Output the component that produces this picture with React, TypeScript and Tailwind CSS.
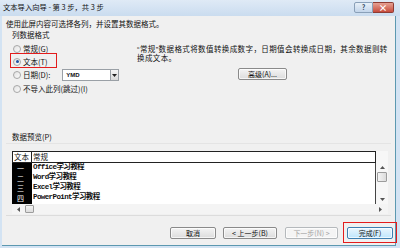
import React from "react";

function Radio({ checked }: { checked?: boolean }) {
  return (
    <span className="w-[8px] h-[8px] rounded-full border border-[#a8a8a8] bg-gradient-to-br from-[#e2e2e2] to-[#fbfbfb] flex items-center justify-center shrink-0">
      {checked && <span className="w-[3px] h-[3px] rounded-full bg-[#1f4fa3]" />}
    </span>
  );
}

function Btn({
  children,
  w,
  disabled,
  def,
}: {
  children: React.ReactNode;
  w: string;
  disabled?: boolean;
  def?: boolean;
}) {
  const base =
    "h-[12px] rounded-[2px] border flex items-center justify-center text-[7px] leading-none whitespace-nowrap shadow-[inset_0_0_0_1px_rgba(255,255,255,0.7)]";
  const look = def
    ? "border-[#3c7fb1] bg-gradient-to-b from-[#eaf6fd] to-[#bee6fd] text-[#111]"
    : disabled
    ? "border-[#b5b9bc] bg-[#f4f4f4] text-[#a3a3a3]"
    : "border-[#8a8a8a] bg-gradient-to-b from-[#f4f4f4] to-[#dcdcdc] text-[#111]";
  return <div className={`${base} ${look} ${w}`}>{children}</div>;
}

export default function App() {
  const rows = [
    ["一", "Office学习教程"],
    ["二", "Word学习教程"],
    ["三", "Excel学习教程"],
    ["四", "PowerPoint学习教程"],
  ];
  return (
    <div className="w-[400px] h-[248px] overflow-hidden bg-[#d3e3f3] flex flex-col font-['Noto_Sans_CJK_SC',sans-serif] text-[7.5px] leading-none text-[#101010]">
      {/* title bar */}
      <div className="h-[16px] shrink-0 flex items-start bg-gradient-to-b from-[#dfeaf6] to-[#cadcef] pl-[3px]">
        <div className="mt-[4px] whitespace-nowrap text-[7.3px] text-[#111]">
          文本导入向导 - 第 3 步，共 3 步
        </div>
        <div className="ml-auto mr-[6px] mt-[2px] flex">
          <div className="w-[19px] h-[11px] rounded-l-[2px] border border-[#8aa0b8] bg-gradient-to-b from-[#e8f0f8] to-[#c3d5ea] flex items-center justify-center text-[7px] text-[#33465e] font-bold">
            ?
          </div>
          <div className="w-[21px] h-[11px] rounded-r-[2px] border border-l-0 border-[#8e3b33] bg-gradient-to-b from-[#e5a093] to-[#c64a3c] flex items-center justify-center text-[9px] text-white font-bold">
            ×
          </div>
        </div>
      </div>

      {/* body */}
      <div className="flex-1 ml-[2px] mr-[4px] mb-[2px] bg-[#f0f0f0] border-r border-b border-[#5c98b0] flex flex-col relative">
        <div className="pt-[4px] pl-[4px] h-[12px] whitespace-nowrap">
          使用此屏内容可选择各列，并设置其数据格式。
        </div>
        <div className="mt-[3px] pl-[10px] h-[8px] whitespace-nowrap">列数据格式</div>

        <div className="mt-[3px] flex">
          {/* left radios */}
          <div className="pl-[11px] w-[135px] flex flex-col">
            <div className="h-[13px] flex items-center gap-[2px]">
              <Radio />
              <span>常规(G)</span>
            </div>
            <div className="h-[13px] flex items-center gap-[2px] relative">
              <Radio checked />
              <span>文本(T)</span>
              <div className="absolute left-[-3px] top-[-2px] w-[47px] h-[15px] border-[1.5px] border-[#e31c1c]" />
            </div>
            <div className="h-[14px] flex items-center gap-[2px]">
              <Radio />
              <span>日期(D):</span>
              <div className="ml-[10px] w-[57px] h-[12px] border border-[#9aa0a6] bg-white flex items-center">
                <span className="pl-[3px] text-[6px] font-bold font-['Liberation_Sans',sans-serif]">YMD</span>
                <div className="ml-auto w-[8px] h-[10px] border-l border-[#9aa0a6] bg-gradient-to-b from-[#f6f6f6] to-[#dadada] flex items-center justify-center">
                  <svg width="5" height="3" viewBox="0 0 5 3">
                    <path d="M0 0h5L2.5 3z" fill="#222" />
                  </svg>
                </div>
              </div>
            </div>
            <div className="h-[13px] flex items-center gap-[2px]">
              <Radio />
              <span>不导入此列(跳过)(I)</span>
            </div>
          </div>
          {/* right description */}
          <div className="pt-[4px] flex flex-col">
            <div className="whitespace-nowrap text-[7.5px] leading-[8.5px] tracking-[0.4px] h-[17px] font-['Liberation_Sans','Noto_Sans_CJK_SC',sans-serif]">
              “常规”数据格式将数值转换成数字，日期值会转换成日期，其余数据则转
              <br />
              换成文本。
            </div>
            <div className="mt-[5px] ml-[101px]">
              <Btn w="w-[49px]">高级(A)...</Btn>
            </div>
          </div>
        </div>

        <div className="mt-[38px] pl-[10px] h-[8px] flex items-center">
          <span className="whitespace-nowrap">数据预览(P)</span>
        </div>
        <div className="mx-[4px] mt-[2px] h-px bg-[#e4e4e4]" />

        {/* preview */}
        <div className="mt-[7px] ml-[10px] w-[376px] h-[63px] flex flex-col bg-white">
          <div className="flex flex-1">
            <div className="w-[364px] flex flex-col">
              <div className="h-[12px] flex border border-[#222] bg-white">
                <div className="w-[19px] border-r border-[#222] flex items-center pl-[1px]">文本</div>
                <div className="flex-1 flex items-center pl-[1px]">常规</div>
              </div>
              <div className="flex-1 flex">
                <div className="w-[20px] bg-black text-white flex flex-col">
                  {rows.map((r) => (
                    <div key={r[0]} className="h-[10px] flex items-center pl-[5px] text-[7px]">
                      {r[0]}
                    </div>
                  ))}
                </div>
                <div className="flex-1 flex flex-col border-r border-[#444]">
                  {rows.map((r) => (
                    <div
                      key={r[1]}
                      className="h-[10px] flex items-center pl-[1px] text-[7.5px] font-bold font-['Liberation_Mono','Noto_Sans_CJK_SC',monospace] tracking-[-0.6px]"
                    >
                      {r[1]}
                    </div>
                  ))}
                </div>
              </div>
            </div>
            <div className="w-[12px] flex flex-col bg-[#f7f7f7] pt-[12px]">
              <div className="h-[9px] flex items-center justify-center">
                <svg width="5" height="3" viewBox="0 0 5 3">
                  <path d="M0 3h5L2.5 0z" fill="#555" />
                </svg>
              </div>
              <div className="mx-[1px] h-[10px] border border-[#9c9c9c] bg-gradient-to-r from-[#f4f4f4] to-[#dcdcdc] rounded-[1px]" />
              <div className="flex-1" />
              <div className="h-[9px] flex items-center justify-center">
                <svg width="5" height="3" viewBox="0 0 5 3">
                  <path d="M0 0h5L2.5 3z" fill="#555" />
                </svg>
              </div>
            </div>
          </div>
          <div className="h-[10px] flex items-center bg-[#f4f4f4]">
            <div className="w-[13px] flex items-center justify-center">
              <svg width="3" height="5" viewBox="0 0 3 5">
                <path d="M3 0v5L0 2.5z" fill="#555" />
              </svg>
            </div>
            <div className="w-[9px] h-[8px] border border-[#9c9c9c] bg-gradient-to-b from-[#f4f4f4] to-[#dcdcdc] rounded-[1px]" />
            <div className="flex-1" />
            <div className="w-[16px] flex items-center justify-center">
              <svg width="3" height="5" viewBox="0 0 3 5">
                <path d="M0 0v5L3 2.5z" fill="#555" />
              </svg>
            </div>
          </div>
        </div>
        <div className="mx-[4px] mt-[1px] h-px bg-[#dcdcdc]" />

        {/* buttons */}
        <div className="mt-[11px] flex pl-[168px]">
          <Btn w="w-[46px]">取消</Btn>
          <div className="ml-[7px]">
            <Btn w="w-[54px]">&lt; 上一步(B)</Btn>
          </div>
          <div className="ml-[8px]">
            <Btn w="w-[53px]" disabled>
              下一步(N) &gt;
            </Btn>
          </div>
          <div className="ml-[9px] relative">
            <Btn w="w-[46px]" def>
              完成(F)
            </Btn>
            <div className="absolute left-[-4px] top-[-5px] w-[54px] h-[21px] border-[1.5px] border-[#e31c1c]" />
          </div>
        </div>
      </div>
    </div>
  );
}
